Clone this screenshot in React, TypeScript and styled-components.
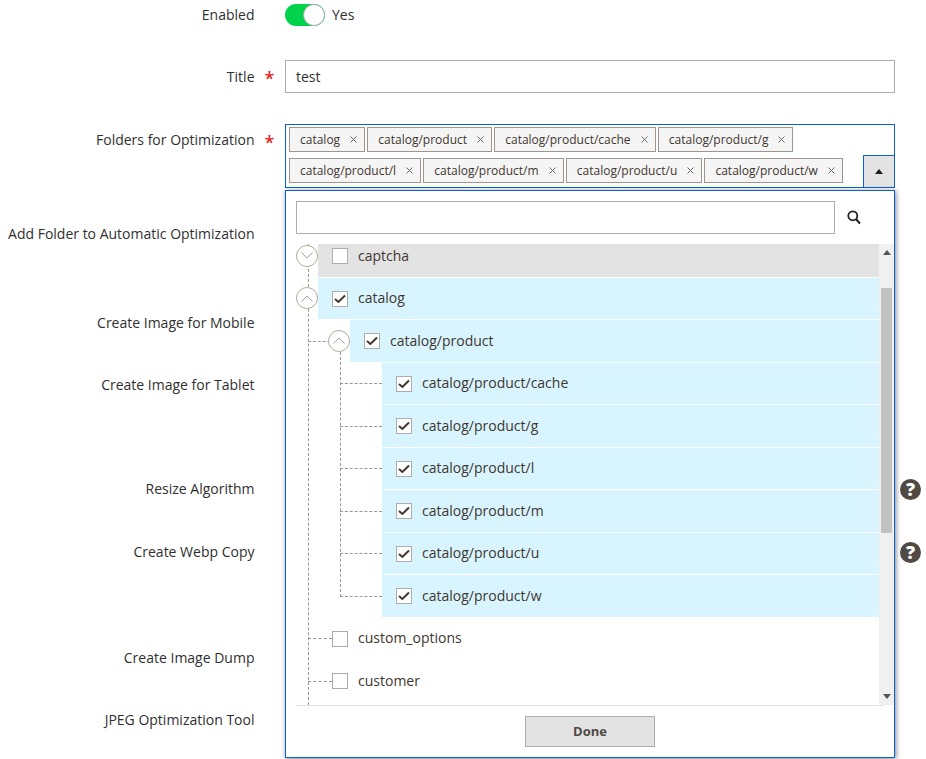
import React from "react";
import styled, { createGlobalStyle } from "styled-components";

const Global = createGlobalStyle`
  html, body { margin: 0; padding: 0; height: 759px; overflow: hidden; background: #fff; }
  body { font-family: "Open Sans", "Liberation Sans", sans-serif; font-size: 14px; color: #303030; }
  * { box-sizing: border-box; }
`;

const BLUE = "#0a61d6";
const LINE = "#a0958c";

const Page = styled.div`
  width: 926px;
  height: 759px;
  overflow: hidden;
`;
const Row = styled.div<{ $h?: number }>`
  display: grid;
  grid-template-columns: 254.5px 30.5px 610px 31px;
  height: ${(p) => (p.$h ? `${p.$h}px` : "auto")};
  align-items: start;
`;
const Label = styled.label<{ $lh?: number }>`
  text-align: right;
  line-height: ${(p) => p.$lh ?? 31}px;
  white-space: nowrap;
`;
const Star = styled.span<{ $lh?: number }>`
  color: #e22626;
  font-size: 18px;
  font-weight: 600;
  padding-left: 10px;
  line-height: ${(p) => p.$lh ?? 33}px;
`;
const ToggleWrap = styled.div`
  display: flex;
  align-items: center;
  gap: 7px;
  height: 30px;
`;
const Switch = styled.span`
  position: relative;
  display: block;
  width: 40px;
  height: 22px;
  border-radius: 11px;
  background: #00d24c;
`;
const Knob = styled.span`
  position: absolute;
  right: 0;
  top: 0;
  width: 22px;
  height: 22px;
  border-radius: 50%;
  background: #fff;
  border: 1px solid #adadad;
`;
const YesText = styled.span`
  line-height: 30px;
  height: 30px;
`;
const TextInput = styled.div<{ $w?: number }>`
  width: ${(p) => (p.$w ? `${p.$w}px` : "100%")};
  height: 33px;
  border: 1px solid #adadad;
  background: #fff;
  padding: 0 10px;
  line-height: 31px;
`;
const Multi = styled.div`
  position: relative;
  height: 64px;
  border: 1px solid ${BLUE};
  background: #fff;
`;
const Chips = styled.div`
  display: flex;
  flex-wrap: wrap;
  gap: 6px 2.2px;
  padding: 2px 30px 0 3px;
`;
const Chip = styled.span`
  display: inline-flex;
  align-items: center;
  justify-content: space-between;
  height: 25px;
  padding: 0 7px 0 10px;
  gap: 10px;
  background: #f5f5f5;
  border: 1px solid ${LINE};
  font-size: 12px;
  color: #41362f;
  white-space: nowrap;
`;
const ChipX = styled.svg`
  width: 7px;
  height: 7px;
  flex: none;
`;
const ArrowBtn = styled.span`
  position: absolute;
  right: -1px;
  bottom: -1px;
  width: 32px;
  height: 33px;
  background: #e3e3e3;
  border: 1px solid ${BLUE};
  display: flex;
  align-items: center;
  justify-content: center;
`;
const UpTri = styled.span<{ $c?: string }>`
  width: 0;
  height: 0;
  border-left: 4px solid transparent;
  border-right: 4px solid transparent;
  border-bottom: 5px solid ${(p) => p.$c ?? "#1a1a1a"};
`;
const DownTri = styled.span`
  width: 0;
  height: 0;
  border-left: 4px solid transparent;
  border-right: 4px solid transparent;
  border-top: 5px solid #555;
`;
const Panel = styled.div`
  position: absolute;
  z-index: 5;
  left: -1px;
  top: 65px;
  width: 610px;
  height: 568px;
  background: #fff;
  border: 1px solid ${BLUE};
  box-shadow: 1px 1px 5px rgba(0, 0, 0, 0.5);
  padding: 10px 0 0 10px;
  display: flex;
  flex-direction: column;
`;
const SearchRow = styled.div`
  display: flex;
  align-items: center;
  gap: 12px;
  margin-bottom: 10px;
`;
const Body = styled.div`
  display: flex;
  height: 461px;
`;
const Tree = styled.div`
  position: relative;
  flex: 1;
  overflow: hidden;
  &::before {
    content: "";
    position: absolute;
    left: 12px;
    top: 0;
    bottom: 0;
    border-left: 1px dashed ${LINE};
  }
`;
const Scroller = styled.div`
  margin-top: -9px;
  position: relative;
`;
const Group = styled.div`
  position: relative;
  &::before {
    content: "";
    position: absolute;
    left: 44px;
    top: -11px;
    bottom: 21px;
    border-left: 1px dashed ${LINE};
  }
`;
const TreeRow = styled.div<{ $depth: number; $state?: "on" | "hover" }>`
  position: relative;
  height: 42.5px;
  margin-left: ${(p) => 22 + p.$depth * 32}px;
  padding-left: 14px;
  display: flex;
  align-items: center;
  gap: 10px;
  color: #41362f;
  border-bottom: 1px solid #fff;
  background: ${(p) => (p.$state === "on" ? "#d8f5ff" : p.$state === "hover" ? "#e3e3e3" : "#fff")};
`;
const RowText = styled.span`
  margin-top: -1.5px;
`;
const Connector = styled.span<{ $w: number; $over?: number }>`
  position: absolute;
  left: ${(p) => -p.$w}px;
  width: ${(p) => p.$w + (p.$over ?? 0)}px;
  top: 50%;
  border-top: 1px dashed ${LINE};
`;
const Expander = styled.span`
  position: absolute;
  z-index: 2;
  left: -22px;
  top: 50%;
  margin-top: -11px;
  width: 22px;
  height: 22px;
  border-radius: 50%;
  border: 1px solid #b7a896;
  background: #fff;
  display: flex;
  align-items: center;
  justify-content: center;
`;
const Box = styled.span`
  position: relative;
  z-index: 1;
  width: 16px;
  height: 16px;
  flex: none;
  margin-top: 1px;
  border: 1px solid #adadad;
  background: #fff;
  display: flex;
  align-items: center;
  justify-content: center;
`;
const Track = styled.div`
  width: 15px;
  background: #f0f0f0;
  position: relative;
  display: flex;
  flex-direction: column;
  align-items: center;
  justify-content: space-between;
  padding: 6px 0 6px 0;
`;
const Thumb = styled.div`
  position: absolute;
  left: 2px;
  top: 44px;
  width: 11px;
  height: 245px;
  background: #c1c1c1;
`;
const Divider = styled.div`
  width: 588px;
  height: 1px;
  background: #e3e3e3;
  flex: none;
`;
const Footer = styled.div`
  display: flex;
  justify-content: center;
  padding: 10px 10px 0 0;
`;
const Done = styled.button`
  width: 130px;
  height: 31px;
  background: #e3e3e3;
  border: 1px solid #adadad;
  font: 700 13px "Open Sans", sans-serif;
  color: #514943;
  padding: 0 0 2px;
`;
const Help = styled.span`
  margin: 6px 0 0 5px;
  width: 21px;
  height: 21px;
  border-radius: 50%;
  background: #514943;
  color: #fff;
  font-size: 18px;
  font-weight: 800;
  line-height: 21px;
  text-align: center;
  display: block;
`;

const X = () => (
  <ChipX viewBox="0 0 7 7">
    <path d="M.5.5l6 6M6.5.5l-6 6" stroke="#6f6760" strokeWidth="1" fill="none" />
  </ChipX>
);
const Check = () => (
  <svg width="12" height="10" viewBox="0 0 12 10">
    <path d="M1 5l3.4 3L11 1.5" stroke="#41362f" strokeWidth="2" fill="none" />
  </svg>
);
const Chevron = ({ up }: { up?: boolean }) => (
  <svg width="12" height="7" viewBox="0 0 12 7">
    <path d={up ? "M.5 6.5L6 1l5.5 5.5" : "M.5.5L6 6 11.5.5"} stroke="#a99f96" strokeWidth="1" fill="none" />
  </svg>
);

type Node = { name: string; depth: number; state?: "on" | "hover"; open?: boolean; up?: boolean; conn?: number; over?: number };

const Item = ({ n }: { n: Node }) => (
  <TreeRow $depth={n.depth} $state={n.state}>
    {n.conn ? <Connector $w={n.conn} $over={n.over} /> : null}
    {n.open ? (
      <Expander>
        <Chevron up={n.up} />
      </Expander>
    ) : null}
    <Box>{n.state === "on" ? <Check /> : null}</Box>
    <RowText>{n.name}</RowText>
  </TreeRow>
);

const chips = [
  "catalog",
  "catalog/product",
  "catalog/product/cache",
  "catalog/product/g",
  "catalog/product/l",
  "catalog/product/m",
  "catalog/product/u",
  "catalog/product/w",
];

const leaves = ["cache", "g", "l", "m", "u", "w"];

export default function App() {
  return (
    <Page>
      <Global />
      <Row $h={60}>
        <Label $lh={30}>Enabled</Label>
        <span />
        <ToggleWrap>
          <Switch>
            <Knob />
          </Switch>
          <YesText>Yes</YesText>
        </ToggleWrap>
      </Row>
      <Row $h={64}>
        <Label $lh={33}>Title</Label>
        <Star $lh={36}>*</Star>
        <TextInput>test</TextInput>
      </Row>
      <Row $h={94}>
        <Label>Folders for Optimization</Label>
        <Star $lh={36}>*</Star>
        <Multi>
          <Chips>
            {chips.map((c) => (
              <Chip key={c}>
                {c}
                <X />
              </Chip>
            ))}
          </Chips>
          <ArrowBtn>
            <UpTri />
          </ArrowBtn>
          <Panel>
            <SearchRow>
              <TextInput $w={539} />
              <svg width="14" height="15" viewBox="0 0 14 15">
                <circle cx="5.8" cy="5.8" r="4.5" stroke="#222" strokeWidth="1.8" fill="none" />
                <path d="M9 9l4 4.6" stroke="#222" strokeWidth="2.2" fill="none" />
              </svg>
            </SearchRow>
            <Body>
              <Tree>
                <Scroller>
                  <Item n={{ name: "captcha", depth: 0, state: "hover", open: true }} />
                  <Item n={{ name: "catalog", depth: 0, state: "on", open: true, up: true }} />
                  <Item n={{ name: "catalog/product", depth: 1, state: "on", open: true, up: true, conn: 42 }} />
                  <Group>
                    {leaves.map((l) => (
                      <Item key={l} n={{ name: `catalog/product/${l}`, depth: 2, state: "on", conn: 42 }} />
                    ))}
                  </Group>
                  <Item n={{ name: "custom_options", depth: 0, conn: 10, over: 14 }} />
                  <Item n={{ name: "customer", depth: 0, conn: 10, over: 14 }} />
                </Scroller>
              </Tree>
              <Track>
                <UpTri $c="#555" />
                <Thumb />
                <DownTri />
              </Track>
            </Body>
            <Divider />
            <Footer>
              <Done>Done</Done>
            </Footer>
          </Panel>
        </Multi>
      </Row>
      <Row $h={89}>
        <Label>Add Folder to Automatic Optimization</Label>
      </Row>
      <Row $h={62}>
        <Label>Create Image for Mobile</Label>
      </Row>
      <Row $h={104}>
        <Label>Create Image for Tablet</Label>
      </Row>
      <Row $h={63}>
        <Label>Resize Algorithm</Label>
        <span />
        <span />
        <Help>?</Help>
      </Row>
      <Row $h={106}>
        <Label>Create Webp Copy</Label>
        <span />
        <span />
        <Help>?</Help>
      </Row>
      <Row $h={62}>
        <Label>Create Image Dump</Label>
      </Row>
      <Row>
        <Label>JPEG Optimization Tool</Label>
      </Row>
    </Page>
  );
}
